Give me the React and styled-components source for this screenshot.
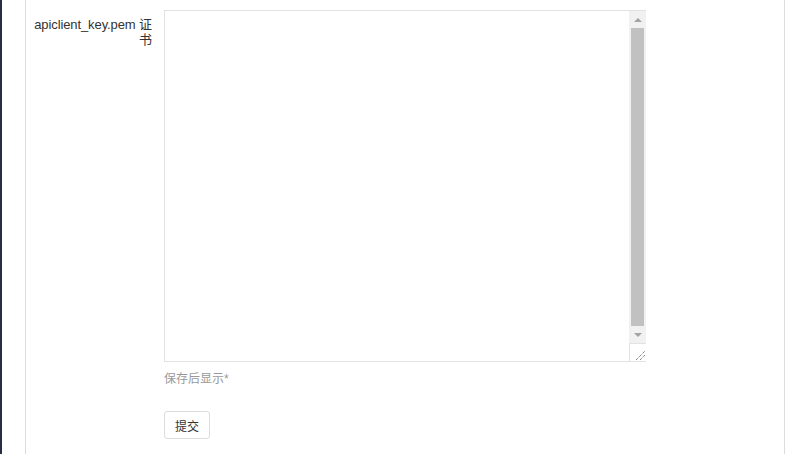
import styled, { createGlobalStyle } from "styled-components";

const GlobalStyle = createGlobalStyle`
  html, body {
    margin: 0;
    padding: 0;
    background: #fff;
  }
  body {
    font-family: "Liberation Sans", "Noto Sans CJK SC", sans-serif;
    color: #333;
  }
`;

const Page = styled.div`
  display: flex;
  height: 454px;
  overflow: hidden;
`;

const SideEdge = styled.div`
  width: 2px;
  background: #282d45;
  flex-shrink: 0;
`;

const Gutter = styled.div`
  width: 23px;
  flex-shrink: 0;
`;

const Panel = styled.div`
  width: 758px;
  flex-shrink: 0;
  border-left: 1px solid #dcdcdc;
  border-right: 1px solid #dcdcdc;
  padding-top: 10px;
`;

const FormRow = styled.div`
  display: grid;
  grid-template-columns: 138px 1fr;
`;

const Label = styled.label`
  padding: 7px 12px 0 0;
  text-align: right;
  font-size: 13px;
  letter-spacing: -0.1px;
  line-height: 15px;
  color: #333;
`;

const FieldColumn = styled.div`
  display: flex;
  flex-direction: column;
  align-items: flex-start;
`;

const AreaBox = styled.div`
  display: flex;
  width: 480px;
  height: 350px;
  border: 1px solid #e2e2e2;
  background: #fff;
`;

const TextArea = styled.textarea`
  flex: 1;
  border: none;
  outline: none;
  resize: none;
  padding: 6px 8px;
  font-family: inherit;
  font-size: 13px;
`;

const ScrollBar = styled.div`
  width: 17px;
  margin-right: -1px;
  display: flex;
  flex-direction: column;
  background: #f1f1f1;
`;

const ArrowButton = styled.div`
  height: 17px;
  display: flex;
  align-items: center;
  justify-content: center;
  &::after {
    content: "";
    border-left: 4px solid transparent;
    border-right: 4px solid transparent;
    ${(p) =>
      p.$down
        ? "border-top: 4px solid #a3a3a3;"
        : "border-bottom: 4px solid #a3a3a3;"}
  }
`;

const Track = styled.div`
  flex: 1;
  display: flex;
  padding: 0 2px;
`;

const Thumb = styled.div`
  flex: 1;
  background: #c1c1c1;
`;

const Corner = styled.div`
  height: 17px;
  background: #fff;
  border-top: 1px solid #e2e2e2;
  border-left: 1px solid #e2e2e2;
  display: flex;
  align-items: flex-end;
  justify-content: flex-end;
`;

const Hint = styled.div`
  margin-top: 9px;
  font-size: 12px;
  line-height: 16px;
  color: #999;
`;

const SubmitButton = styled.button`
  margin-top: 24px;
  height: 28px;
  padding: 0 10px;
  border: 1px solid #dcdcdc;
  border-radius: 3px;
  background: #fff;
  color: #333;
  font-family: inherit;
  font-size: 12px;
  cursor: pointer;
`;

function ResizeGrip() {
  return (
    <svg width="12" height="12" viewBox="0 0 12 12">
      <line x1="2" y1="11" x2="11" y2="2" stroke="#555" strokeWidth="1" strokeDasharray="1 1" />
      <line x1="6" y1="11" x2="11" y2="6" stroke="#555" strokeWidth="1" strokeDasharray="1 1" />
    </svg>
  );
}

export default function App() {
  return (
    <>
      <GlobalStyle />
      <Page>
        <SideEdge />
        <Gutter />
        <Panel>
          <FormRow>
            <Label>
              apiclient_key.pem 证
              <br />书
            </Label>
            <FieldColumn>
              <AreaBox>
                <TextArea />
                <ScrollBar>
                  <ArrowButton />
                  <Track>
                    <Thumb />
                  </Track>
                  <ArrowButton $down />
                  <Corner>
                    <ResizeGrip />
                  </Corner>
                </ScrollBar>
              </AreaBox>
              <Hint>保存后显示*</Hint>
              <SubmitButton>提交</SubmitButton>
            </FieldColumn>
          </FormRow>
        </Panel>
      </Page>
    </>
  );
}
